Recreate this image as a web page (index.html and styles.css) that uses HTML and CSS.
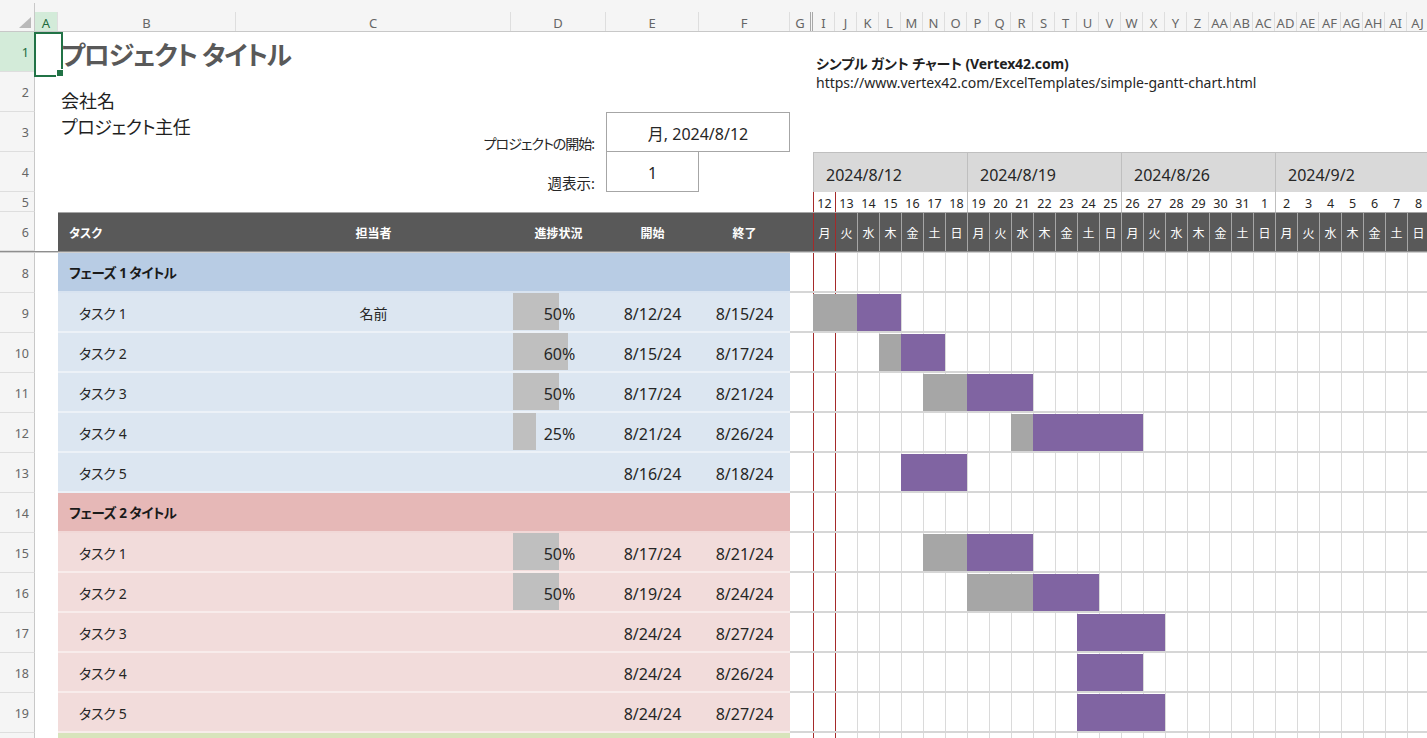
FILE: index.html
```html
<!DOCTYPE html>
<html lang="ja">
<head>
<meta charset="utf-8">
<title>シンプル ガント チャート</title>
<link rel="stylesheet" href="styles.css">
</head>
<body>
<div class="sheet">
  <div class="row colbar">
    <div class="corner"><svg width="12" height="11" viewBox="0 0 12 11"><polygon points="12,0 12,11 0,11" fill="#b9b9b9"/></svg></div>
    <div class="ch sel">A</div><div class="ch">B</div><div class="ch">C</div><div class="ch">D</div><div class="ch">E</div><div class="ch">F</div><div class="ch hid">G</div>
    <div class="ch">I</div><div class="ch">J</div><div class="ch">K</div><div class="ch">L</div><div class="ch">M</div><div class="ch">N</div><div class="ch">O</div>
    <div class="ch">P</div><div class="ch">Q</div><div class="ch">R</div><div class="ch">S</div><div class="ch">T</div><div class="ch">U</div><div class="ch">V</div>
    <div class="ch">W</div><div class="ch">X</div><div class="ch">Y</div><div class="ch">Z</div><div class="ch">AA</div><div class="ch">AB</div><div class="ch">AC</div>
    <div class="ch">AD</div><div class="ch">AE</div><div class="ch">AF</div><div class="ch">AG</div><div class="ch">AH</div><div class="ch">AI</div><div class="ch">AJ</div>
  </div>

  <div class="row h40">
    <div class="rh sel">1</div>
    <div class="a1"></div>
    <div class="c sp6 title">プロジェクト タイトル</div>
    <div class="c sp28 vtitle">シンプル ガント チャート (Vertex42.com)</div>
  </div>

  <div class="row h40">
    <div class="rh">2</div>
    <div></div>
    <div class="c sp6 company">会社名</div>
    <div class="c sp28 url">https://www.vertex42.com/ExcelTemplates/simple-gantt-chart.html</div>
  </div>

  <div class="row h40">
    <div class="rh">3</div>
    <div></div>
    <div class="c sp2 company manager">プロジェクト主任</div>
    <div class="c lbl long">プロジェクトの開始:</div>
    <div class="c sp2 box">月, 2024/8/12</div>
    <div></div>
    <div class="sp28"></div>
  </div>

  <div class="row h40">
    <div class="rh">4</div>
    <div></div>
    <div class="sp2"></div>
    <div class="c lbl">週表示:</div>
    <div class="c box box4">1</div>
    <div></div>
    <div></div>
    <div class="sp28 weeks">
      <div class="wk">2024/8/12</div>
      <div class="wk">2024/8/19</div>
      <div class="wk">2024/8/26</div>
      <div class="wk">2024/9/2</div>
    </div>
  </div>

  <div class="row h20">
    <div class="rh">5</div>
    <div></div>
    <div class="sp6"></div>
    <div class="sp28 days">
      <div class="dn">12</div><div class="dn">13</div><div class="dn">14</div><div class="dn">15</div><div class="dn">16</div><div class="dn">17</div><div class="dn">18</div>
      <div class="dn">19</div><div class="dn">20</div><div class="dn">21</div><div class="dn">22</div><div class="dn">23</div><div class="dn">24</div><div class="dn">25</div>
      <div class="dn">26</div><div class="dn">27</div><div class="dn">28</div><div class="dn">29</div><div class="dn">30</div><div class="dn">31</div><div class="dn">1</div>
      <div class="dn">2</div><div class="dn">3</div><div class="dn">4</div><div class="dn">5</div><div class="dn">6</div><div class="dn">7</div><div class="dn">8</div>
    </div>
  </div>

  <div class="row h39">
    <div class="rh">6</div>
    <div></div>
    <div class="c hd first">タスク</div>
    <div class="c hd ctr">担当者</div>
    <div class="c hd ctr">進捗状況</div>
    <div class="c hd ctr">開始</div>
    <div class="c hd ctr">終了</div>
    <div class="c hd"></div>
    <div class="sp28 dows">
      <div class="dw">月</div><div class="dw">火</div><div class="dw">水</div><div class="dw">木</div><div class="dw">金</div><div class="dw">土</div><div class="dw">日</div>
      <div class="dw">月</div><div class="dw">火</div><div class="dw">水</div><div class="dw">木</div><div class="dw">金</div><div class="dw">土</div><div class="dw">日</div>
      <div class="dw">月</div><div class="dw">火</div><div class="dw">水</div><div class="dw">木</div><div class="dw">金</div><div class="dw">土</div><div class="dw">日</div>
      <div class="dw">月</div><div class="dw">火</div><div class="dw">水</div><div class="dw">木</div><div class="dw">金</div><div class="dw">土</div><div class="dw">日</div>
    </div>
  </div>

  <div class="freeze"></div>

  <!-- Phase 1 -->
  <div class="row h40 p1">
    <div class="rh">8</div><div></div>
    <div class="c cl sp5 phase">フェーズ 1 タイトル</div>
    <div class="gg"></div>
    <div class="sp28 gantt"></div>
  </div>
  <div class="row h40 t1">
    <div class="rh">9</div><div></div>
    <div class="c cl name">タスク 1</div>
    <div class="c cl ctr">名前</div>
    <div class="cl prog"><span class="pbar" style="width:46px"></span><span class="ptext">50%</span></div>
    <div class="c cl num">8/12/24</div>
    <div class="c cl num">8/15/24</div>
    <div class="gg"></div>
    <div class="sp28 gantt"><span class="bar done" style="grid-column:1 / span 2"></span><span class="bar todo" style="grid-column:3 / span 2"></span></div>
  </div>
  <div class="row h40 t1">
    <div class="rh">10</div><div></div>
    <div class="c cl name">タスク 2</div>
    <div class="c cl ctr"></div>
    <div class="cl prog"><span class="pbar" style="width:55px"></span><span class="ptext">60%</span></div>
    <div class="c cl num">8/15/24</div>
    <div class="c cl num">8/17/24</div>
    <div class="gg"></div>
    <div class="sp28 gantt"><span class="bar done" style="grid-column:4 / span 1"></span><span class="bar todo" style="grid-column:5 / span 2"></span></div>
  </div>
  <div class="row h40 t1">
    <div class="rh">11</div><div></div>
    <div class="c cl name">タスク 3</div>
    <div class="c cl ctr"></div>
    <div class="cl prog"><span class="pbar" style="width:46px"></span><span class="ptext">50%</span></div>
    <div class="c cl num">8/17/24</div>
    <div class="c cl num">8/21/24</div>
    <div class="gg"></div>
    <div class="sp28 gantt"><span class="bar done" style="grid-column:6 / span 2"></span><span class="bar todo" style="grid-column:8 / span 3"></span></div>
  </div>
  <div class="row h40 t1">
    <div class="rh">12</div><div></div>
    <div class="c cl name">タスク 4</div>
    <div class="c cl ctr"></div>
    <div class="cl prog"><span class="pbar" style="width:23px"></span><span class="ptext">25%</span></div>
    <div class="c cl num">8/21/24</div>
    <div class="c cl num">8/26/24</div>
    <div class="gg"></div>
    <div class="sp28 gantt"><span class="bar done" style="grid-column:10 / span 1"></span><span class="bar todo" style="grid-column:11 / span 5"></span></div>
  </div>
  <div class="row h40 t1">
    <div class="rh">13</div><div></div>
    <div class="c cl name">タスク 5</div>
    <div class="c cl ctr"></div>
    <div class="cl prog"></div>
    <div class="c cl num">8/16/24</div>
    <div class="c cl num">8/18/24</div>
    <div class="gg"></div>
    <div class="sp28 gantt"><span class="bar todo" style="grid-column:5 / span 3"></span></div>
  </div>

  <!-- Phase 2 -->
  <div class="row h40 p2">
    <div class="rh">14</div><div></div>
    <div class="c cl sp5 phase">フェーズ 2 タイトル</div>
    <div class="gg"></div>
    <div class="sp28 gantt"></div>
  </div>
  <div class="row h40 t2">
    <div class="rh">15</div><div></div>
    <div class="c cl name">タスク 1</div>
    <div class="c cl ctr"></div>
    <div class="cl prog"><span class="pbar" style="width:46px"></span><span class="ptext">50%</span></div>
    <div class="c cl num">8/17/24</div>
    <div class="c cl num">8/21/24</div>
    <div class="gg"></div>
    <div class="sp28 gantt"><span class="bar done" style="grid-column:6 / span 2"></span><span class="bar todo" style="grid-column:8 / span 3"></span></div>
  </div>
  <div class="row h40 t2">
    <div class="rh">16</div><div></div>
    <div class="c cl name">タスク 2</div>
    <div class="c cl ctr"></div>
    <div class="cl prog"><span class="pbar" style="width:46px"></span><span class="ptext">50%</span></div>
    <div class="c cl num">8/19/24</div>
    <div class="c cl num">8/24/24</div>
    <div class="gg"></div>
    <div class="sp28 gantt"><span class="bar done" style="grid-column:8 / span 3"></span><span class="bar todo" style="grid-column:11 / span 3"></span></div>
  </div>
  <div class="row h40 t2">
    <div class="rh">17</div><div></div>
    <div class="c cl name">タスク 3</div>
    <div class="c cl ctr"></div>
    <div class="cl prog"></div>
    <div class="c cl num">8/24/24</div>
    <div class="c cl num">8/27/24</div>
    <div class="gg"></div>
    <div class="sp28 gantt"><span class="bar todo" style="grid-column:13 / span 4"></span></div>
  </div>
  <div class="row h40 t2">
    <div class="rh">18</div><div></div>
    <div class="c cl name">タスク 4</div>
    <div class="c cl ctr"></div>
    <div class="cl prog"></div>
    <div class="c cl num">8/24/24</div>
    <div class="c cl num">8/26/24</div>
    <div class="gg"></div>
    <div class="sp28 gantt"><span class="bar todo" style="grid-column:13 / span 3"></span></div>
  </div>
  <div class="row h40 t2">
    <div class="rh">19</div><div></div>
    <div class="c cl name">タスク 5</div>
    <div class="c cl ctr"></div>
    <div class="cl prog"></div>
    <div class="c cl num">8/24/24</div>
    <div class="c cl num">8/27/24</div>
    <div class="gg"></div>
    <div class="sp28 gantt"><span class="bar todo" style="grid-column:13 / span 4"></span></div>
  </div>

  <!-- Phase 3 (only its top edge is visible) -->
  <div class="row h40 p3">
    <div class="rh"></div><div></div>
    <div class="c cl sp5 phase"></div>
    <div class="gg"></div>
    <div class="sp28 gantt"></div>
  </div>
</div>
</body>
</html>
```

FILE: styles.css
```css
:root {
  --cols: 35px 23px 178px 275px 95px 93px 91px 23px repeat(28, 22px);
  --red: #a52a2a;
}
* { box-sizing: border-box; }
html, body { margin: 0; padding: 0; }
body {
  width: 1427px;
  height: 738px;
  overflow: hidden;
  background: #fff;
  color: #262626;
  font-family: "Noto Sans", "Noto Sans CJK JP", sans-serif;
  font-feature-settings: "palt";
  line-height: 1.25;
}
.sheet { width: 1427px; overflow: hidden; }
.row { display: grid; grid-template-columns: var(--cols); }
.h40 { height: 40px; }
.h39 { height: 39px; }
.h20 { height: 20px; }
.sp2 { grid-column: span 2; }
.sp5 { grid-column: span 5; }
.sp6 { grid-column: span 6; }
.sp28 { grid-column: span 28; }

/* column header band */
.colbar { height: 32px; background: #f5f5f5; border-bottom: 1px solid #c8c8c8; }
.corner { position: relative; border-right: 1px solid #c8c8c8; margin-top: 3px; }
.corner svg { position: absolute; right: 3px; bottom: 3px; }
.ch {
  margin-top: 12px;
  display: flex; align-items: center; justify-content: center;
  padding-top: 3px;
  font-size: 13px; color: #666;
  border-right: 1px solid #dedede;
  white-space: nowrap; overflow: hidden;
}
.ch.sel { background: #d3ebd9; color: #1f6b3e; }
.ch.hid { border-right: 3px double #a8a8a8; }

/* row headers */
.rh {
  background: #f5f5f5;
  border-right: 1px solid #c8c8c8;
  border-bottom: 1px solid #dedede;
  display: flex; align-items: center; justify-content: flex-end;
  padding-right: 5px; padding-top: 3px;
  font-size: 12.5px; color: #666;
}
.rh.sel { background: #d3ebd9; color: #1f6b3e; }

/* selected cell A1 */
.a1 { position: relative; }
.a1::after {
  content: "";
  position: absolute; left: -1px; top: 0;
  width: 25px; height: 41px;
  border: 2px solid #217346;
}
.a1::before {
  content: "";
  position: absolute; left: 21px; top: 37px;
  width: 6px; height: 6px;
  background: #217346; border: 1px solid #fff;
  z-index: 2;
}

.c { display: flex; align-items: center; white-space: nowrap; min-width: 0; }

/* top area */
.title {
  font-size: 26px; font-weight: 700; color: #595959;
  letter-spacing: -1.4px;
  padding-left: 3px; align-items: flex-end; padding-bottom: 1px;
}
.company { font-size: 18px; padding-left: 3px; align-items: flex-end; color: #1f1f1f; }
.company.manager { align-items: flex-start; padding-top: 4px; letter-spacing: -0.4px; }
.lbl { justify-content: flex-end; align-items: flex-end; padding-right: 11px; font-size: 14.5px; }
.lbl.long { font-size: 14px; letter-spacing: -1px; padding-right: 12px; }
.box { justify-content: center; border: 1px solid #a6a6a6; font-size: 16px; padding-top: 3px; }
.box4 { border-top: none; }
.vtitle { font-size: 14px; font-weight: 700; padding-left: 3px; align-items: flex-end; color: #1f1f1f; letter-spacing: -0.1px; }
.url { font-size: 14px; padding-left: 3px; align-items: flex-start; padding-top: 2px; color: #262626; }

/* timeline header */
.weeks { display: grid; grid-template-columns: repeat(4, 154px); }
.wk {
  display: flex; align-items: center;
  background: #d9d9d9;
  border-top: 1px solid #bfbfbf; border-left: 1px solid #bfbfbf;
  padding-left: 12px; padding-top: 5px;
  font-size: 16px; color: #262626;
}
.days {
  display: grid; grid-template-columns: repeat(28, 22px);
  background:
    linear-gradient(to right, var(--red) 0 1px, transparent 1px 22px, var(--red) 22px 23px, transparent 23px) no-repeat,
    repeating-linear-gradient(to right, #bfbfbf 0 1px, transparent 1px 154px);
}
.dn { display: flex; justify-content: center; align-items: center; font-size: 12.5px; padding-left: 1px; padding-top: 4px; color: #262626; }

.hd { background: #595959; color: #fff; font-size: 12px; font-weight: 700; border-top: 1px solid #a6a6a6; padding-top: 3px; }
.hd.first { padding-left: 11px; }
.hd.ctr { justify-content: center; }
.dows {
  display: grid; grid-template-columns: repeat(28, 22px);
  border-top: 1px solid #a6a6a6;
  background:
    linear-gradient(to right, var(--red) 0 1px, transparent 1px 22px, var(--red) 22px 23px, transparent 23px) no-repeat,
    repeating-linear-gradient(to right, #a6a6a6 0 1px, transparent 1px 22px),
    #595959;
}
.dw { display: flex; justify-content: center; align-items: center; color: #fff; font-size: 12px; padding-left: 1px; padding-top: 3px; }

.freeze { height: 2px; background: linear-gradient(#8e8e8e 0 1px, #cfcfcf 1px 2px); }

/* table body */
.cl { border-bottom: 2px solid rgba(255, 255, 255, 0.45); font-size: 14px; padding-top: 3px; }
.p1 .cl { background: #b8cce4; }
.t1 .cl { background: #dce6f1; }
.p2 .cl { background: #e6b8b7; }
.t2 .cl { background: #f2dcdb; }
.p3 .cl { background: #d8e4bc; }
.phase { font-weight: 700; font-size: 13.5px; letter-spacing: -0.5px; padding-left: 11px; color: #1a1a1a; }
.name { padding-left: 21px; letter-spacing: -0.3px; }
.ctr { justify-content: center; }
.num { justify-content: center; font-size: 16px; }
.prog { display: grid; grid-template-areas: "s"; font-size: 16px; padding-top: 0; }
.pbar { grid-area: s; align-self: start; height: 37px; margin-left: 2px; background: #bfbfbf; }
.ptext { grid-area: s; justify-self: center; align-self: center; padding-left: 2px; padding-top: 3px; }

.gg { background: #fff; border-bottom: 2px solid #d6d6d6; }
.gantt {
  display: grid; grid-template-columns: repeat(28, 22px);
  border-bottom: 2px solid #d6d6d6;
  background:
    linear-gradient(to right, var(--red) 0 1px, transparent 1px 22px, var(--red) 22px 23px, transparent 23px) no-repeat,
    repeating-linear-gradient(to right, #dadada 0 1px, transparent 1px 22px),
    #fff;
}
.bar { grid-row: 1; height: 37px; margin-top: 1px; }
.done { background: #a6a6a6; }
.todo { background: #8064a2; }
```
